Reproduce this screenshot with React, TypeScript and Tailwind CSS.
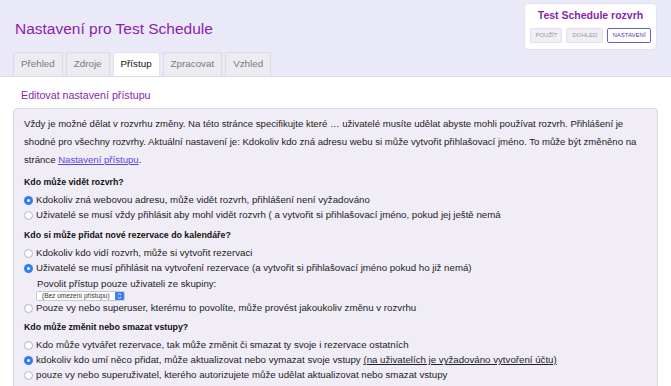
import React from 'react';

function Radio({ checked }: { checked?: boolean }) {
  return checked ? (
    <span className="inline-flex h-[9px] w-[9px] shrink-0 items-center justify-center rounded-full bg-[#2f7cf6]">
      <span className="h-[3px] w-[3px] rounded-full bg-white" />
    </span>
  ) : (
    <span className="inline-block h-[9px] w-[9px] shrink-0 rounded-full border border-[#b5b5b5] bg-white" />
  );
}

function Option({ checked, children }: { checked?: boolean; children: React.ReactNode }) {
  return (
    <div className="flex h-[15px] items-center gap-[3px] whitespace-nowrap">
      <Radio checked={checked} />
      <span className="text-[9.7px] text-[#222]">{children}</span>
    </div>
  );
}

function Question({ children }: { children: React.ReactNode }) {
  return <div className="mb-[3px] text-[8.8px] font-bold leading-[15px] text-[#111]">{children}</div>;
}

const tabs = ['Přehled', 'Zdroje', 'Přístup', 'Zpracovat', 'Vzhled'];

export default function App() {
  return (
    <div className="h-[386px] w-[671px] overflow-hidden bg-white font-['Liberation_Sans',Arial,sans-serif]">
      <div className="flex h-[77px] justify-between border-b border-[#dcdbe8] bg-[#e9e9f7]">
        <div className="flex flex-col justify-between pl-[13px]">
          <h1 className="pl-[2px] pt-[17px] text-[15.5px] text-[#8a1fab]">Nastavení pro Test Schedule</h1>
          <div className="flex gap-[3px]">
            {tabs.map((t) => (
              <div
                key={t}
                className={`flex h-[24px] items-center rounded-t-[3px] border border-b-0 px-[7px] text-[9.8px] ${
                  t === 'Přístup'
                    ? 'border-[#e2e2ea] bg-white text-[#111]'
                    : 'border-[#dcdae6] bg-[#eeebf3] text-[#7a7a7a]'
                }`}
              >
                {t}
              </div>
            ))}
          </div>
        </div>
        <div className="mr-[14px] mt-[3px] flex h-[47px] w-[133px] flex-col items-center rounded-[4px] border border-[#e3e1ee] bg-white">
          <div className="mt-[4px] text-[10.5px] font-bold text-[#8a1fab]">Test Schedule rozvrh</div>
          <div className="mt-[4px] flex gap-[4px]">
            <span className="flex h-[15px] items-center rounded-[2px] border border-[#e2e0e8] bg-[#f1eff5] px-[4px] text-[6px] text-[#9a9a9a]">POUŽÍT</span>
            <span className="flex h-[15px] items-center rounded-[2px] border border-[#e2e0e8] bg-[#f1eff5] px-[5px] text-[6px] text-[#9a9a9a]">DOHLED</span>
            <span className="flex h-[15px] items-center rounded-[2px] border border-[#6a5fd1] bg-white px-[4px] text-[6px] text-[#4a42b8]">NASTAVENÍ</span>
          </div>
        </div>
      </div>

      <div className="px-[13px]">
        <div className="pb-[5px] pl-[8px] pt-[11px] text-[10.7px] leading-[15px] text-[#8a1fab]">Editovat nastavení přístupu</div>
        <div className="rounded-t-[4px] border border-[#dcd8e2] bg-[#f1edf6] px-[10px] pt-[6px]">
          <p className="text-[9.6px] leading-[18px] text-[#222]">
            Vždy je možné dělat v rozvrhu změny. Na této stránce specifikujte které … uživatelé musíte udělat abyste mohli používat rozvrh. Přihlášení je shodné pro všechny rozvrhy. Aktuální nastavení je: Kdokoliv kdo zná adresu webu si může vytvořit přihlašovací jméno. To může být změněno na stránce{' '}
            <span className="text-[#5a45e0] underline">Nastavení přístupu</span>.
          </p>

          <div className="mt-[6px]">
            <Question>Kdo může vidět rozvrh?</Question>
            <Option checked>Kdokoliv zná webovou adresu, může vidět rozvrh, přihlášení není vyžadováno</Option>
            <Option>Uživatelé se musí vždy přihlásit aby mohl vidět rozvrh ( a vytvořit si přihlašovací jméno, pokud jej ještě nemá</Option>
          </div>

          <div className="mt-[5px]">
            <Question>Kdo si může přidat nové rezervace do kalendáře?</Question>
            <Option>Kdokoliv kdo vidí rozvrh, může si vytvořit rezervaci</Option>
            <Option checked>Uživatelé se musí přihlásit na vytvoření rezervace (a vytvořit si přihlašovací jméno pokud ho již nemá)</Option>
            <div className="pl-[13px] text-[9.7px] leading-[15px] text-[#222]">Povolit přístup pouze uživateli ze skupiny:</div>
            <div className="flex h-[10px] items-center pl-[12px]">
              <span className="flex h-[10px] items-center overflow-hidden rounded-[2px] border border-[#c9c9c9] bg-white">
                <span className="px-[5px] text-[6.5px] leading-[8px] text-[#333]">(Bez omezení přístupu)</span>
                <span className="flex h-full w-[9px] items-center justify-center bg-[#3b82f6]">
                  <svg width="5" height="8" viewBox="0 0 5 8">
                    <path d="M1 3 L2.5 1.5 L4 3 M1 5 L2.5 6.5 L4 5" stroke="white" strokeWidth="0.9" fill="none" />
                  </svg>
                </span>
              </span>
            </div>
            <Option>Pouze vy nebo superuser, kterému to povolíte, může provést jakoukoliv změnu v rozvrhu</Option>
          </div>

          <div className="mt-[4px] pb-[20px]">
            <Question>Kdo může změnit nebo smazat vstupy?</Question>
            <Option>Kdo může vytvářet rezervace, tak může změnit či smazat ty svoje i rezervace ostatních</Option>
            <Option checked>
              kdokoliv kdo umí něco přidat, může aktualizovat nebo vymazat svoje vstupy{' '}
              <span className="underline">(na uživatelích je vyžadováno vytvoření účtu)</span>
            </Option>
            <Option>pouze vy nebo superuživatel, kterého autorizujete může udělat aktualizovat nebo smazat vstupy</Option>
          </div>
        </div>
      </div>
    </div>
  );
}
